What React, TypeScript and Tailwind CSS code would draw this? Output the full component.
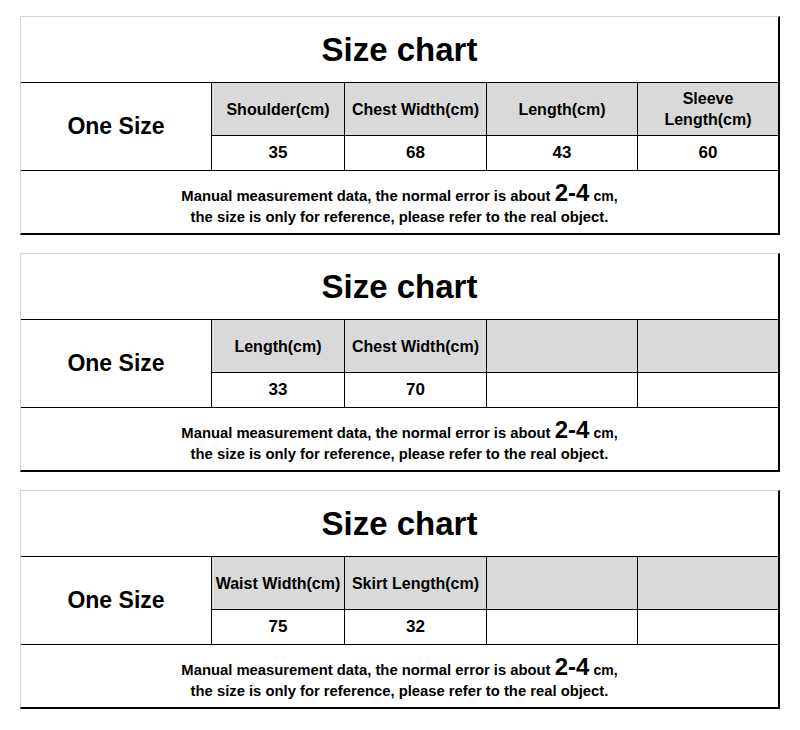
import React from 'react';

interface ChartProps {
    headers: React.ReactNode[];
    values: string[];
}

const font = { fontFamily: '"Liberation Sans", Arial, sans-serif' };

const SizeChart: React.FC<ChartProps> = ({ headers, values }) => {
    return (
        <div className="w-[760px] border-l border-t border-[#d3d3d3] border-r-2 border-b-2 border-r-black border-b-black bg-black">
            <div className="grid grid-cols-[190px_132px_141px_150px_140px] grid-rows-[65px_52px_34px_62px] gap-px">
                <div className="col-span-5 bg-white flex items-center justify-center text-[33px] font-bold text-black">
                    Size chart
                </div>
                <div className="row-span-2 bg-white flex items-center justify-center text-[23px] font-bold text-black">
                    One Size
                </div>
                {headers.map((h, i) => (
                    <div
                        key={'h' + i}
                        className="bg-[#d9d9d9] flex items-center justify-center text-center text-[16px] leading-[21px] font-bold text-black"
                    >
                        {h}
                    </div>
                ))}
                {values.map((v, i) => (
                    <div key={'v' + i} className="bg-white flex items-center justify-center text-[17px] font-bold text-black">
                        {v}
                    </div>
                ))}
                <div className="col-span-5 bg-white flex flex-col items-center justify-center pt-[5px] text-[14.8px] leading-[21px] font-bold text-black">
                    <p>
                        Manual measurement data, the normal error is about{' '}
                        <span className="text-[24px]">2-4</span> <span className="text-[14px]">cm,</span>
                    </p>
                    <p>the size is only for reference, please refer to the real object.</p>
                </div>
            </div>
        </div>
    );
};

export default function App() {
    return (
        <div className="bg-white w-[800px] h-[730px] pt-4 pl-5 flex flex-col gap-[18px]" style={font}>
            <SizeChart
                headers={[
                    'Shoulder(cm)',
                    'Chest Width(cm)',
                    'Length(cm)',
                    <>
                        Sleeve
                        <br />
                        Length(cm)
                    </>,
                ]}
                values={['35', '68', '43', '60']}
            />
            <SizeChart headers={['Length(cm)', 'Chest Width(cm)', '', '']} values={['33', '70', '', '']} />
            <SizeChart headers={['Waist Width(cm)', 'Skirt Length(cm)', '', '']} values={['75', '32', '', '']} />
        </div>
    );
}
